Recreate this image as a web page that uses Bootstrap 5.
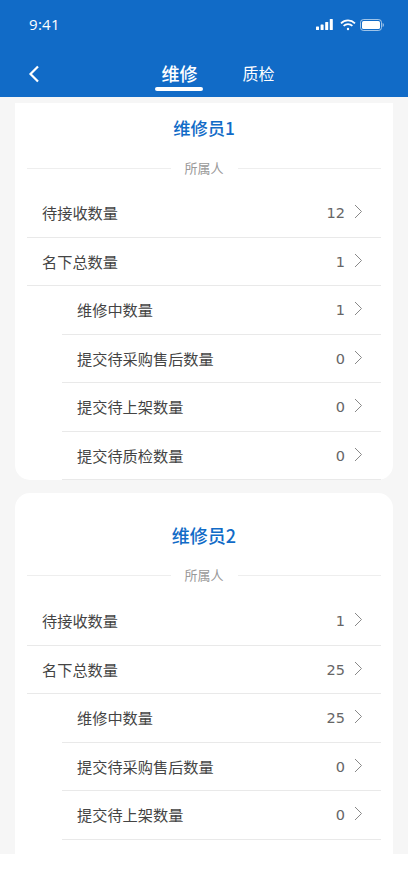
<!DOCTYPE html>
<html lang="zh">
<head>
<meta charset="utf-8">
<title>维修</title>
<meta name="viewport" content="width=device-width, initial-scale=1">
<link href="https://cdn.jsdelivr.net/npm/bootstrap@5.3.0/dist/css/bootstrap.min.css" rel="stylesheet">
<style>
html,body{height:100%;}
body{background:#fff;font-family:"Noto Sans CJK SC","Noto Sans",sans-serif;color:#333;overflow:hidden;}
.app-shell{height:854px;background:#f6f6f6;overflow:hidden;}
.app-head{height:97px;background:#116bc7;color:#fff;flex:none;}
.status-row{height:49px;padding:0 24px 0 29px;}
.clock{font:500 15px/1 "Open Sans",sans-serif;letter-spacing:.3px;}
.signal-icon{margin-right:3px;}
.tab-row{height:48px;}
.back-btn{position:absolute;left:28px;top:16px;line-height:0;}
.tab-main{padding-bottom:6.5px;}
.tab-on{font-size:18px;font-weight:500;line-height:26px;width:48px;text-align:center;}
.tab-bar{width:48px;height:3.500px;border-radius:2px;background:#fff;margin-top:1px;}
.tab-off{font-size:16px;line-height:26px;margin-left:39px;margin-bottom:11px;}
.tab-group{margin-left:22px;}
.panel{margin:6px 15px 0;background:#fff;border-radius:0 0 15px 15px;padding:0 12px;}
.panel-next{margin-top:14px;border-radius:15px;padding-bottom:30px;}
.panel-title{color:#116bc7;font-size:17.300px;font-weight:500;line-height:24px;text-align:center;padding-top:13px;}
.panel-next .panel-title{padding-top:30px;font-size:18px;}
.owner-line{margin-top:16px;height:24px;color:#999;font-size:13px;gap:14px;}
.owner-line::before,.owner-line::after{content:"";flex:1;height:1px;background:#eee;}
.data-row{height:48.5px;border-bottom:1px solid #e9e9e9;padding:0 18px 0 15px;font-size:15.200px;color:#444;}
.owner-line + .data-row{margin-top:9px;}
.panel-next .owner-line + .data-row{margin-top:10px;}
.data-sub{margin-left:35px;padding-left:15px;}
.data-num{font-family:"DejaVu Sans",sans-serif;font-size:14.500px;color:#666;margin-right:9px;margin-top:3px;}
.row-arrow{margin-top:-2px;}
.panel-first .data-row:last-child{margin-bottom:-1px;}
</style>
</head>
<body>
<div class="app-shell d-flex flex-column">
  <header class="app-head">
    <div class="status-row d-flex align-items-center justify-content-between">
      <span class="clock">9:41</span>
      <span class="d-flex align-items-center gap-1">
        <svg class="signal-icon" width="17" height="11" viewBox="0 0 17 11" fill="#fff"><rect x="0" y="7.500" width="3" height="3.500" rx=".6"/><rect x="4.600" y="5.500" width="3" height="5.500" rx=".6"/><rect x="9.200" y="3" width="3" height="8" rx=".6"/><rect x="13.800" y="0" width="3" height="11" rx=".6"/></svg>
        <svg width="16" height="12" viewBox="0 0 16 12" fill="none" stroke="#fff" stroke-width="1.700"><path d="M1 4.300a10 10 0 0 1 14 0"/><path d="M3.600 6.900a6.300 6.300 0 0 1 8.800 0"/><circle cx="8" cy="10" r="1.200" fill="#fff" stroke="none"/></svg>
        <svg width="24" height="12" viewBox="0 0 24 12" fill="none"><rect x=".5" y=".5" width="21" height="11" rx="3" stroke="#fff" stroke-opacity=".6"/><rect x="2" y="2" width="18" height="8" rx="1.600" fill="#fff"/><path d="M22.600 4v4c.8-.3 1.300-1.100 1.300-2s-.5-1.700-1.300-2z" fill="#fff" fill-opacity=".6"/></svg>
      </span>
    </div>
    <div class="tab-row position-relative d-flex justify-content-center align-items-end">
      <a class="back-btn" href="#" aria-label="返回"><svg width="12" height="18" viewBox="0 0 12 18" fill="none" stroke="#fff" stroke-width="2.200"><path d="M10 1.500 2.500 9l7.500 7.500"/></svg></a>
      <div class="tab-group d-flex align-items-end">
        <div class="tab-main"><div class="tab-on">维修</div><div class="tab-bar"></div></div>
        <div class="tab-off">质检</div>
      </div>
    </div>
  </header>
  <main class="flex-grow-1 overflow-hidden">
    <section class="panel panel-first">
      <div class="panel-title">维修员1</div>
      <div class="owner-line d-flex align-items-center">所属人</div>
      <div class="data-row d-flex align-items-center justify-content-between"><span>待接收数量</span><span class="d-flex align-items-center"><span class="data-num">12</span><svg class="row-arrow" width="9" height="15" viewBox="0 0 9 15" fill="none" stroke="#888" stroke-width="1"><path d="M1 1l6.500 6.500L1 14"/></svg></span></div>
      <div class="data-row d-flex align-items-center justify-content-between"><span>名下总数量</span><span class="d-flex align-items-center"><span class="data-num">1</span><svg class="row-arrow" width="9" height="15" viewBox="0 0 9 15" fill="none" stroke="#888" stroke-width="1"><path d="M1 1l6.500 6.500L1 14"/></svg></span></div>
      <div class="data-row data-sub d-flex align-items-center justify-content-between"><span>维修中数量</span><span class="d-flex align-items-center"><span class="data-num">1</span><svg class="row-arrow" width="9" height="15" viewBox="0 0 9 15" fill="none" stroke="#888" stroke-width="1"><path d="M1 1l6.500 6.500L1 14"/></svg></span></div>
      <div class="data-row data-sub d-flex align-items-center justify-content-between"><span>提交待采购售后数量</span><span class="d-flex align-items-center"><span class="data-num">0</span><svg class="row-arrow" width="9" height="15" viewBox="0 0 9 15" fill="none" stroke="#888" stroke-width="1"><path d="M1 1l6.500 6.500L1 14"/></svg></span></div>
      <div class="data-row data-sub d-flex align-items-center justify-content-between"><span>提交待上架数量</span><span class="d-flex align-items-center"><span class="data-num">0</span><svg class="row-arrow" width="9" height="15" viewBox="0 0 9 15" fill="none" stroke="#888" stroke-width="1"><path d="M1 1l6.500 6.500L1 14"/></svg></span></div>
      <div class="data-row data-sub d-flex align-items-center justify-content-between"><span>提交待质检数量</span><span class="d-flex align-items-center"><span class="data-num">0</span><svg class="row-arrow" width="9" height="15" viewBox="0 0 9 15" fill="none" stroke="#888" stroke-width="1"><path d="M1 1l6.500 6.500L1 14"/></svg></span></div>
    </section>
    <section class="panel panel-next">
      <div class="panel-title">维修员2</div>
      <div class="owner-line d-flex align-items-center">所属人</div>
      <div class="data-row d-flex align-items-center justify-content-between"><span>待接收数量</span><span class="d-flex align-items-center"><span class="data-num">1</span><svg class="row-arrow" width="9" height="15" viewBox="0 0 9 15" fill="none" stroke="#888" stroke-width="1"><path d="M1 1l6.500 6.500L1 14"/></svg></span></div>
      <div class="data-row d-flex align-items-center justify-content-between"><span>名下总数量</span><span class="d-flex align-items-center"><span class="data-num">25</span><svg class="row-arrow" width="9" height="15" viewBox="0 0 9 15" fill="none" stroke="#888" stroke-width="1"><path d="M1 1l6.500 6.500L1 14"/></svg></span></div>
      <div class="data-row data-sub d-flex align-items-center justify-content-between"><span>维修中数量</span><span class="d-flex align-items-center"><span class="data-num">25</span><svg class="row-arrow" width="9" height="15" viewBox="0 0 9 15" fill="none" stroke="#888" stroke-width="1"><path d="M1 1l6.500 6.500L1 14"/></svg></span></div>
      <div class="data-row data-sub d-flex align-items-center justify-content-between"><span>提交待采购售后数量</span><span class="d-flex align-items-center"><span class="data-num">0</span><svg class="row-arrow" width="9" height="15" viewBox="0 0 9 15" fill="none" stroke="#888" stroke-width="1"><path d="M1 1l6.500 6.500L1 14"/></svg></span></div>
      <div class="data-row data-sub d-flex align-items-center justify-content-between"><span>提交待上架数量</span><span class="d-flex align-items-center"><span class="data-num">0</span><svg class="row-arrow" width="9" height="15" viewBox="0 0 9 15" fill="none" stroke="#888" stroke-width="1"><path d="M1 1l6.500 6.500L1 14"/></svg></span></div>
    </section>
  </main>
</div>
<script src="https://cdn.jsdelivr.net/npm/bootstrap@5.3.0/dist/js/bootstrap.bundle.min.js"></script>
</body>
</html>
